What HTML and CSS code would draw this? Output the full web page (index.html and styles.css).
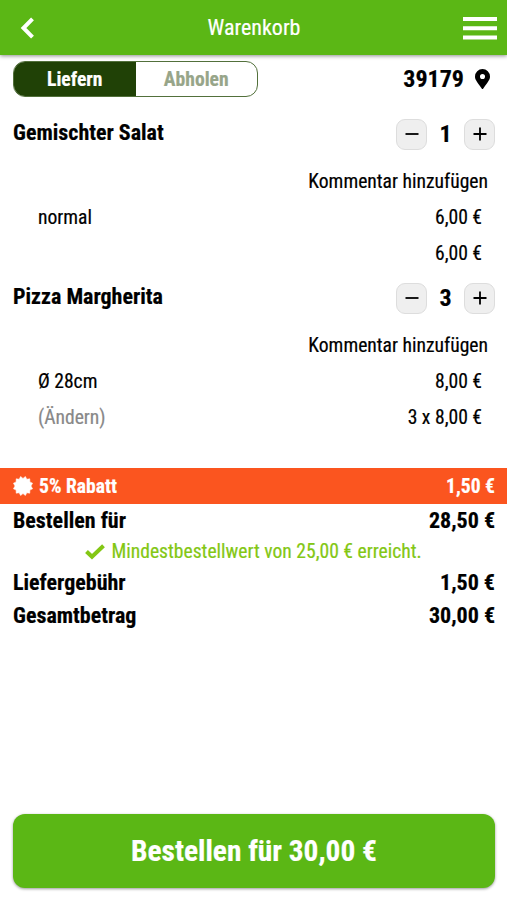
FILE: index.html
```html
<!DOCTYPE html>
<html lang="de">
<head>
<meta charset="utf-8">
<title>Warenkorb</title>
<link rel="stylesheet" href="styles.css">
</head>
<body>
<header class="header">
  <svg class="back" viewBox="0 0 16 24" width="16" height="24"><path d="M12.500 2.800 3.500 12l9 9.200" fill="none" stroke="#fff" stroke-width="4"/></svg>
  <h1 class="title">Warenkorb</h1>
  <svg class="menu" viewBox="0 0 34 24" width="34" height="24"><path d="M0 3h34M0 12.200h34M0 21.400h34" stroke="#fff" stroke-width="4"/></svg>
</header>
<main class="cart">
  <div class="delivery">
    <div class="tabs"><span class="tab active">Liefern</span><span class="tab">Abholen</span></div>
    <div class="zip">39179
      <svg viewBox="0 0 384 512" width="15" height="20"><path d="M172 502C27 291 0 270 0 192a192 192 0 0 1 384 0c0 78-27 99-172 310a24 24 0 0 1-40 0zM192 257a65 65 0 1 0 0-130 65 65 0 0 0 0 130z"/></svg>
    </div>
  </div>
  <section class="item">
    <div class="item-head">
      <h2 class="name">Gemischter Salat</h2>
      <div class="stepper">
        <span class="step"><svg viewBox="0 0 14 14" width="14" height="14"><path d="M.5 7h13"/></svg></span>
        <span class="count">1</span>
        <span class="step"><svg viewBox="0 0 14 14" width="14" height="14"><path d="M.5 7h13M7 .5v13"/></svg></span>
      </div>
    </div>
    <div class="comment">Kommentar hinzufügen</div>
    <div class="line"><span>normal</span><span>6,00 €</span></div>
    <div class="line"><span></span><span>6,00 €</span></div>
  </section>
  <section class="item">
    <div class="item-head">
      <h2 class="name">Pizza Margherita</h2>
      <div class="stepper">
        <span class="step"><svg viewBox="0 0 14 14" width="14" height="14"><path d="M.5 7h13"/></svg></span>
        <span class="count">3</span>
        <span class="step"><svg viewBox="0 0 14 14" width="14" height="14"><path d="M.5 7h13M7 .5v13"/></svg></span>
      </div>
    </div>
    <div class="comment">Kommentar hinzufügen</div>
    <div class="line"><span>Ø 28cm</span><span>8,00 €</span></div>
    <div class="line"><span class="muted">(Ändern)</span><span>3 x 8,00 €</span></div>
  </section>
  <div class="discount">
    <svg viewBox="0 0 20 20" width="20" height="20"><path d="M10 2.400 12.400.400 13.800 3.200 16.800 2.800 16.900 5.900 19.600 7.200 18 10 19.600 12.800 16.900 14.100 16.800 17.200 13.800 16.800 12.400 19.600 10 17.600 7.600 19.600 6.200 16.800 3.200 17.200 3.100 14.100.400 12.800 2 10 .400 7.200 3.100 5.900 3.200 2.800 6.200 3.200 7.600.400z" fill="#fff" stroke="#fff" stroke-width=".5"/></svg>
    <span>5% Rabatt</span><span class="amount">1,50 €</span>
  </div>
  <div class="total"><span>Bestellen für</span><span>28,50 €</span></div>
  <div class="minimum">
    <svg viewBox="0 0 20 16" width="20" height="16"><path d="M1.500 7.500 7 12.800 18.500 1.800" fill="none" stroke="#83c714" stroke-width="4"/></svg>
    <span>Mindestbestellwert von 25,00 € erreicht.</span>
  </div>
  <div class="total"><span>Liefergebühr</span><span>1,50 €</span></div>
  <div class="total"><span>Gesamtbetrag</span><span>30,00 €</span></div>
</main>
<footer class="footer"><button class="order">Bestellen für 30,00 €</button></footer>
</body>
</html>
```

FILE: styles.css
```css
* { box-sizing: border-box; }
body {
  margin: 0;
  height: 900px;
  display: flex;
  flex-direction: column;
  background: #fff;
  color: #000;
  font: 19.6px/36px "Roboto Condensed", Roboto, sans-serif;
  -webkit-text-stroke: .2px currentColor;
}
.header {
  flex: none;
  height: 55px;
  padding: 0 10px 0 20px;
  display: grid;
  grid-template-columns: 34px 1fr 43px;
  align-items: center;
  background: #5bb715;
  color: #fff;
  box-shadow: 0 1px 4px rgba(0, 0, 0, .45);
}
.title {
  margin: 0;
  font-size: 22px;
  font-weight: 400;
  text-align: center;
}
.menu { justify-self: end; }
.cart { flex: 1; }
.delivery {
  height: 59px;
  padding: 6px 17px 17px 13px;
  display: flex;
  justify-content: space-between;
}
.tabs {
  width: 245px;
  height: 36px;
  display: flex;
  border: 1px solid #52703b;
  border-radius: 12px;
  overflow: hidden;
  line-height: 36px;
  font-weight: 700;
}
.tab { flex: 1; text-align: center; color: #97a589; }
.active { background: #204106; color: #fff; }
.zip {
  display: flex;
  align-items: center;
  gap: 11px;
  font-size: 24px;
  font-weight: 700;
}
.item { height: 164px; }
.item-head {
  height: 40px;
  padding: 0 12px 0 13px;
  display: flex;
  align-items: center;
  justify-content: space-between;
}
.name { margin: 0 0 2px; font-size: 22px; font-weight: 700; }
.stepper { display: flex; align-items: center; }
.step {
  width: 31px;
  height: 31px;
  display: flex;
  align-items: center;
  justify-content: center;
  background: #efefef;
  border: 1px solid #ddd;
  border-radius: 9px;
}
.step path { stroke: #000; stroke-width: 1.8; }
.count { width: 37px; text-align: center; font-size: 24px; font-weight: 700; }
.comment { margin-top: 10px; padding-right: 19px; text-align: right; }
.line {
  height: 36px;
  padding: 0 25px 0 38px;
  display: flex;
  justify-content: space-between;
}
.muted { color: #888; }
.discount {
  height: 36px;
  margin-top: 26px;
  padding: 0 12px 0 13px;
  display: flex;
  align-items: center;
  gap: 6px;
  background: #fb551f;
  color: #fff;
  font-weight: 700;
  line-height: 37px;
}
.amount { margin-left: auto; }
.total {
  height: 33px;
  padding: 0 12px 0 13px;
  display: flex;
  justify-content: space-between;
  line-height: 34px;
  font-size: 22px;
  font-weight: 700;
}
.minimum {
  height: 29px;
  padding-top: 1px;
  display: flex;
  align-items: center;
  justify-content: center;
  gap: 6px;
  color: #83c714;
}
.footer { flex: none; padding: 0 12px 12px 13px; }
.order {
  display: block;
  width: 100%;
  height: 74px;
  padding: 0;
  border: 0;
  border-radius: 12px;
  background: #5bb715;
  color: #fff;
  font: 700 29.4px/74px "Roboto Condensed", Roboto, sans-serif;
  box-shadow: 0 1px 3px rgba(0, 0, 0, .4);
}
```
